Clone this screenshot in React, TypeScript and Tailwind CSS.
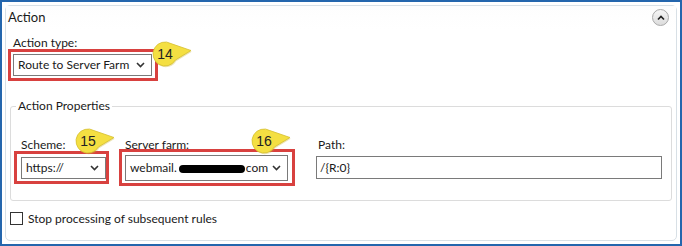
import React from "react";

const font = { fontFamily: 'Lato, "Segoe UI", "Open Sans", sans-serif' };

function Chevron() {
  return (
    <svg width="9" height="6" viewBox="0 0 9 6" className="shrink-0">
      <path d="M1 1 L4.5 4.5 L8 1" fill="none" stroke="#333" strokeWidth="1.6" />
    </svg>
  );
}

function Select({ children, cls }: { children: React.ReactNode; cls: string }) {
  return (
    <div className={`${cls} border border-[#7a7a7a] bg-white flex items-center justify-between pl-[4px] pr-[6px] text-[12px] text-[#1a1a1a]`}>
      <span className="whitespace-nowrap flex items-center">{children}</span>
      <Chevron />
    </div>
  );
}

function Callout({ n, className }: { n: string; className: string }) {
  return (
    <div className={`absolute ${className} w-[40px] h-[27px]`}>
      <svg width="40" height="27" viewBox="0 0 40 27" className="absolute inset-0">
        <path
          d="M19 2.6 L39 9.5 L23.4 19 A12 12 0 1 1 19 2.6 Z"
          fill="#c9b12e"
          opacity="0.35"
          transform="translate(0.8 1.2)"
        />
        <path
          d="M19 2.6 L39 9.5 L23.4 19 A12 12 0 1 1 19 2.6 Z"
          fill="#f4df42"
          stroke="#d6bf30"
          strokeWidth="0.8"
        />
      </svg>
      <span
        className="absolute left-[1px] top-[4px] w-[24px] text-center text-[14px] leading-[18px] text-[#222]"
        style={{ fontFamily: '"Liberation Sans", Arial, sans-serif' }}
      >
        {n}
      </span>
    </div>
  );
}

export default function App() {
  return (
    <div className="w-[682px] h-[246px] border-2 border-[#2466ad] bg-white p-[3px] overflow-hidden" style={font}>
      <div className="relative h-full border border-[#d8e0e6] rounded-[5px] flex flex-col text-[12px] text-[#1a1a1a]">
        <div className="h-[23px] shrink-0 flex items-center justify-between pl-[2px] pr-[7px] bg-gradient-to-b from-[#fdfdfd] to-white">
          <span className="text-[13px]">Action</span>
          <div className="w-[17px] h-[17px] rounded-full border border-[#a9a9a9] bg-gradient-to-b from-[#f6f6f6] to-[#dcdcdc] flex items-center justify-center">
            <svg width="8" height="6" viewBox="0 0 8 6">
              <path d="M1 4.5 L4 1.5 L7 4.5" fill="none" stroke="#222" strokeWidth="1.7" />
            </svg>
          </div>
        </div>

        <div className="pl-[7px] pt-[6px] shrink-0">
          <div className="leading-[15px]">Action type:</div>
          <div className="w-fit -ml-[5px] -mt-[1px] border-[3px] border-[#d8413f] pt-[2px] pl-[2px] pr-[3px] pb-[2px]">
            <Select cls="w-[139px] h-[22px]">Route to Server Farm</Select>
          </div>
          <Callout n="14" className="left-[146px] top-[35px]" />
        </div>

        <fieldset className="shrink-0 h-[102px] mx-[4px] mt-[18px] border border-[#dcdcdc] rounded-[3px] pl-[10px] pr-[9px] pt-0 pb-0">
          <legend className="-ml-[5px] px-[2px] leading-[14px]">Action Properties</legend>
          <div className="flex items-start mt-[24px]">
            <div className="flex flex-col">
              <div className="leading-[15px]">Scheme:</div>
              <div className="w-fit -ml-[7px] -mt-[1px] border-[3px] border-[#d8413f] pt-[3px] pl-[4px] pr-0 pb-[2px]">
                <Select cls="w-[85px] h-[22px]">https://</Select>
              </div>
            </div>
            <div className="flex flex-col ml-[16px]">
              <div className="leading-[15px]">Server farm:</div>
              <div className="w-fit -ml-[6px] -mt-[3px] border-[3px] border-[#d8413f] pt-[3px] pl-[3px] pr-[4px] pb-[2px]">
                <Select cls="w-[163px] h-[26px]">
                  <span>webmail.</span>
                  <span className="inline-block w-[66px] h-[8px] bg-black rounded-full ml-[2px] mr-[1px] mt-[2px]" />
                  <span>com</span>
                </Select>
              </div>
            </div>
            <div className="flex flex-col ml-[21px] flex-1">
              <div className="leading-[15px] pl-[2px]">Path:</div>
              <div className="mt-[4px] h-[23px] border border-[#7a7a7a] flex items-center pl-[3px]">/{"{"}R:0{"}"}</div>
            </div>
          </div>
          <Callout n="15" className="left-[69px] top-[122px]" />
          <Callout n="16" className="left-[245px] top-[122px]" />
        </fieldset>

        <div className="flex items-center mt-[10px] pl-[4px] leading-[15px]">
          <div className="w-[13px] h-[13px] border border-[#333] bg-white" />
          <span className="ml-[5px]">Stop processing of subsequent rules</span>
        </div>
      </div>
    </div>
  );
}
